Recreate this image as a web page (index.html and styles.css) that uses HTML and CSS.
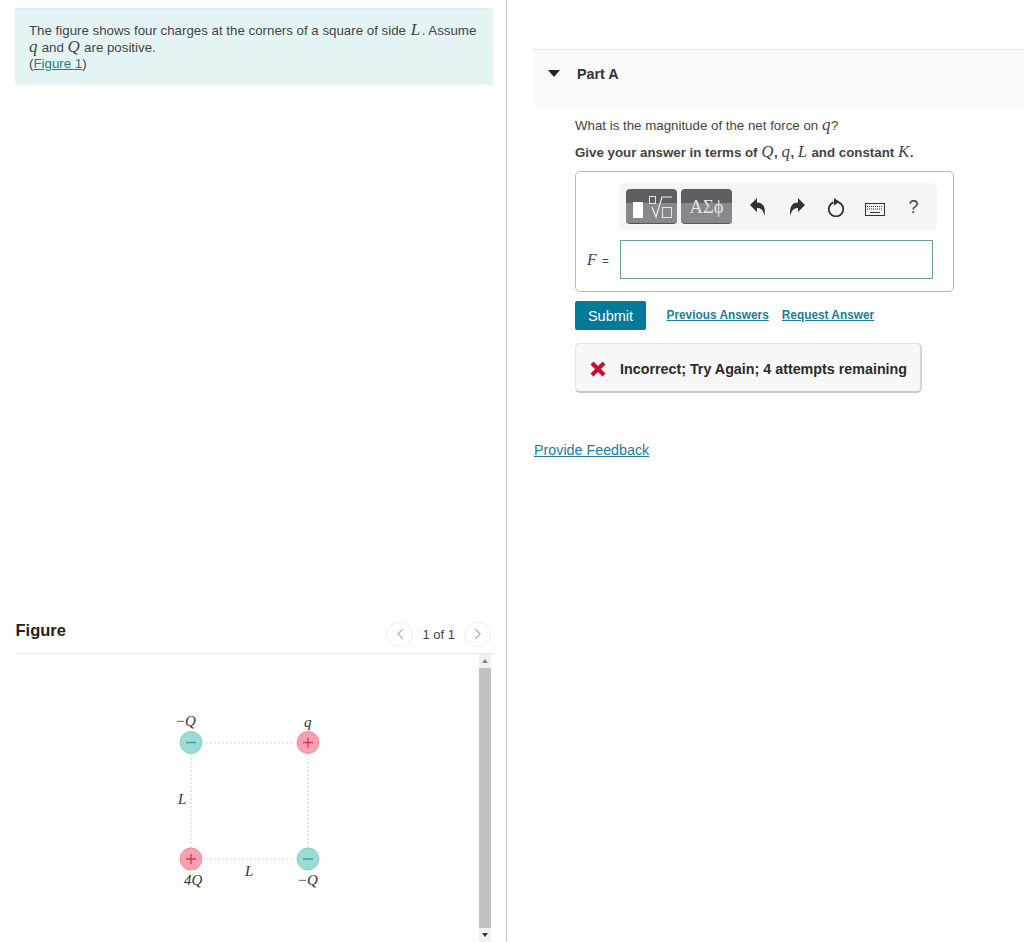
FILE: index.html
```html
<!DOCTYPE html>
<html>
<head>
  <meta charset="utf-8">
  <title>Part A</title>
  <link rel="stylesheet" href="styles.css">
</head>
<body>
  <div class="left-pane">
    <div class="intro">
      The figure shows four charges at the corners of a square of side <i class="m m-wide">L</i>. Assume<br>
      <i class="m">q</i> and <i class="m">Q</i> are positive.<br>
      (<a href="#">Figure 1</a>)
    </div>

    <div class="figure-head">
      <h2>Figure</h2>
      <div class="pager">
        <span class="page-btn">
          <svg width="8" height="12" viewBox="0 0 8 12"><path d="M7 1 2 6l5 5" fill="none" stroke="#bbb" stroke-width="1.6"/></svg>
        </span>
        <span class="page-num">1 of 1</span>
        <span class="page-btn">
          <svg width="8" height="12" viewBox="0 0 8 12"><path d="M1 1l5 5-5 5" fill="none" stroke="#bbb" stroke-width="1.6"/></svg>
        </span>
      </div>
    </div>

    <div class="figure-body">
      <svg class="diagram" width="464" height="288" viewBox="0 0 464 288">
        <g stroke="#cfd3d3" stroke-width="1" stroke-dasharray="2 2" fill="none">
          <path d="M191 89H278"/>
          <path d="M191 205H278"/>
          <path d="M176 100V194"/>
          <path d="M293 100V194"/>
        </g>
        <circle class="neg" cx="176" cy="88.500" r="11"/>
        <circle class="pos" cx="293" cy="88.500" r="11"/>
        <circle class="pos" cx="176" cy="205" r="11"/>
        <circle class="neg" cx="293" cy="205" r="11"/>
        <path d="M171 88.500h10M288 205h10" stroke="#3f9f9c" stroke-width="1.300"/>
        <path d="M288 88.500h10M293 83.500v10M171 205h10M176 200v10" stroke="#d8344f" stroke-width="1.300"/>
        <text class="lbl" x="160" y="72">−Q</text>
        <text class="lbl" x="289" y="73">q</text>
        <text class="lbl" x="163" y="150">L</text>
        <text class="lbl" x="230" y="222">L</text>
        <text class="lbl" x="169" y="231">4Q</text>
        <text class="lbl" x="282" y="231">−Q</text>
      </svg>
      <div class="scrollbar">
        <span class="arrow-up"></span>
        <span class="thumb"></span>
        <span class="arrow-down"></span>
      </div>
    </div>
  </div>

  <div class="right-pane">
    <div class="part-head">
      <span class="caret"></span>
      <h3>Part A</h3>
    </div>

    <div class="part-body">
      <p class="question">What is the magnitude of the net force on <i class="m">q</i>?</p>
      <p class="question bold">Give your answer in terms of <i class="m">Q</i>, <i class="m">q</i>, <i class="m">L</i> and constant <i class="m">K</i>.</p>

      <div class="answer-box">
        <div class="toolbar">
          <span class="tpl-btn">
            <svg width="50" height="34" viewBox="0 0 50 34">
              <rect x="6" y="13" width="10" height="16" fill="#fff"/>
              <rect x="22.500" y="7.500" width="6" height="7" fill="none" stroke="#e4e4e4"/>
              <path d="M25 18l4 10 6-20h10" fill="none" stroke="#eee" stroke-width="1.200"/>
              <rect x="35.500" y="18.500" width="9" height="10" fill="none" stroke="#e4e4e4"/>
            </svg>
          </span>
          <span class="tpl-btn greek">ΑΣϕ</span>
          <span class="tool first">
            <svg width="16" height="18" viewBox="0 0 16 18"><path d="M0 7 7 0V4.500C13 4.500 16 9 14.500 18 13.500 12 11 10 7 10V14Z" fill="#333"/></svg>
          </span>
          <span class="tool">
            <svg width="16" height="18" viewBox="0 0 16 18"><path d="M16 7 9 0V4.500C3 4.500 0 9 1.500 18 2.500 12 5 10 9 10V14Z" fill="#333"/></svg>
          </span>
          <span class="tool">
            <svg width="18" height="20" viewBox="0 0 18 20"><path d="M6.500 5.400a7.200 7.200 0 1 0 5 0" fill="none" stroke="#333" stroke-width="1.800"/><path d="M7 1v7.500l5.500-3.700Z" fill="#333"/></svg>
          </span>
          <span class="tool kbd">
            <svg width="20" height="13" viewBox="0 0 20 13"><rect x=".5" y=".5" width="19" height="12" fill="#f4f4f4" stroke="#333"/><path d="M2 3.500h16M2 6h16" stroke="#333" stroke-dasharray="1 1"/><path d="M5 9.500h10" stroke="#333"/></svg>
          </span>
          <span class="tool help">?</span>
        </div>
        <div class="answer-row">
          <label><i class="m">F</i> =</label>
          <input class="answer-input" type="text">
        </div>
      </div>

      <div class="actions">
        <button class="submit">Submit</button>
        <a class="act-link" href="#">Previous Answers</a>
        <a class="act-link" href="#">Request Answer</a>
      </div>

      <div class="feedback">
        <svg width="16" height="16" viewBox="0 0 16 16"><path d="M3.500 .5 8 5 12.500 .5 15.500 3.500 11 8 15.500 12.500 12.500 15.500 8 11 3.500 15.500 .5 12.500 5 8 .5 3.500Z" fill="#c8102e"/></svg>
        <span>Incorrect; Try Again; 4 attempts remaining</span>
      </div>
    </div>

    <a class="provide" href="#">Provide Feedback</a>
  </div>
</body>
</html>
```

FILE: styles.css
```css
* { margin: 0; padding: 0; box-sizing: border-box; }
html, body { height: 942px; overflow: hidden; }
body {
  display: flex;
  font-family: "Liberation Sans", Arial, sans-serif;
  font-size: 13.300px;
  color: #444;
  background: #fff;
}

a { color: #1a7f97; }

.m {
  margin: 0 .5px 0 0;
  font-family: "Liberation Serif", serif;
  font-style: italic;
  font-size: 17px;
  line-height: 14px;
}
.m-wide { margin: 0 1.500px 0 1px; }

/* left column */
.left-pane {
  width: 507px;
  height: 942px;
  border-right: 1px solid #c9ccce;
  padding: 8px 13px 0 15px;
}

.intro {
  height: 77px;
  padding: 14px 14px 0;
  line-height: 16.500px;
  background: #e4f4f5;
  border-top: 1px solid #dfeaea;
}

.figure-head {
  display: flex;
  justify-content: space-between;
  align-items: center;
  height: 48px;
  margin-top: 521px;
  padding: 1px 0 0 .5px;
  border-bottom: 1px solid #e8e8e8;
}
.figure-head h2 {
  font-size: 16.500px;
  font-weight: bold;
  color: #222;
}

.pager {
  display: flex;
  align-items: center;
  gap: 10px;
  padding-top: 8px;
  margin-right: 2px;
}
.page-btn {
  display: flex;
  align-items: center;
  justify-content: center;
  width: 27px;
  height: 25px;
  border: 1px solid #eee;
  border-radius: 50%;
}
.page-num { color: #444; font-size: 13px; margin: 0 -1px; }

.figure-body {
  display: flex;
  height: 288px;
}
.diagram { flex: none; }
.diagram .neg { fill: #9adbd8; stroke: #8fd0cd; }
.diagram .pos { fill: #f99fb0; stroke: #ee8ea0; }
.diagram .lbl {
  font-family: "Liberation Serif", serif;
  font-style: italic;
  font-size: 15px;
  fill: #333;
}

.scrollbar {
  display: flex;
  flex-direction: column;
  align-items: center;
  width: 12px;
  background: #f1f1f1;
}
.thumb { flex: 1; width: 12px; background: #c1c1c1; }
.arrow-up, .arrow-down {
  width: 0;
  height: 0;
  margin: 5px 0;
  border-left: 3px solid transparent;
  border-right: 3px solid transparent;
}
.arrow-up { border-bottom: 4px solid #888; }
.arrow-down { border-top: 4px solid #333; }

/* right column */
.right-pane {
  flex: 1;
  padding: 49px 0 0 27px;
}

.part-head {
  display: flex;
  align-items: flex-start;
  height: 58px;
  padding: 16px 0 0 14px;
  background: #f9f9f9;
  border-top: 1px solid #e8e8e8;
}
.caret {
  width: 0;
  height: 0;
  margin-top: 4px;
  border-left: 6px solid transparent;
  border-right: 6px solid transparent;
  border-top: 7px solid #222;
}
.part-head h3 {
  margin-left: 17px;
  font-size: 14.300px;
  font-weight: bold;
  color: #333;
}

.part-body { padding: 11px 0 0 41px; }

.question { height: 16px; line-height: 16px; margin-bottom: 11px; }
.bold { font-weight: bold; }
.bold .m { font-weight: normal; }

.answer-box {
  width: 379px;
  height: 121px;
  padding: 11px 16px 0 43px;
  border: 1px solid #bbb;
  border-radius: 5px;
  margin-top: -1px;
}

.toolbar {
  display: flex;
  align-items: center;
  height: 48px;
  padding: 0 0 0 7px;
  background: #f5f5f5;
  border-radius: 5px;
}
.tpl-btn {
  display: flex;
  flex: none;
  align-items: center;
  justify-content: center;
  height: 35px;
  width: 51px;
  margin: 0 4px 1px 0;
  border-radius: 4px;
  background: linear-gradient(#5f5f63 0 40%, #88888c 40% 100%);
  border-bottom: 1px solid #555;
}
.greek {
  padding-top: 2px;
  color: #e4e4e4;
  font-family: "Liberation Serif", serif;
  font-size: 18.500px;
}
.tool {
  display: flex;
  flex: none;
  align-items: center;
  justify-content: center;
  width: 39px;
  height: 30px;
}
.tool.first { margin-left: 2px; }
.tool.kbd { padding-top: 4px; }
.tool.help { font-size: 18px; color: #444; }

.answer-row {
  display: flex;
  align-items: center;
  margin: 9px 0 0 -32px;
  gap: 9px;
}
.answer-row label { width: 24px; font-size: 11.500px; white-space: nowrap; }
.answer-row label .m { margin: 0 2px 0 0; font-size: 16px; }
.answer-input {
  width: 313px;
  height: 39px;
  border: 1px solid #6d9ba3;
  background: #fff;
}

.actions {
  display: flex;
  align-items: center;
  margin-top: 9px;
}
.submit {
  width: 71px;
  height: 29px;
  border: none;
  border-radius: 2px;
  background: #007a99;
  color: #fff;
  font-family: inherit;
  font-size: 14.500px;
}
.act-link {
  margin: 0 0 2px 13px;
  font-size: 11.850px;
  font-weight: bold;
}
.submit + .act-link { margin-left: 20.500px; }

.feedback {
  display: flex;
  align-items: center;
  gap: 14px;
  width: 347px;
  height: 50px;
  margin-top: 13px;
  padding: 3px 0 0 14px;
  background: #f8f8f8;
  border: 1px solid #e2e2e2;
  border-bottom: 2px solid #c8c8c8;
  border-right: 2px solid #d4d4d4;
  border-radius: 5px;
  font-size: 14.300px;
  font-weight: bold;
  color: #2a2a2a;
}

.provide {
  display: inline-block;
  margin-top: 49px;
  font-size: 14.300px;
}
```
